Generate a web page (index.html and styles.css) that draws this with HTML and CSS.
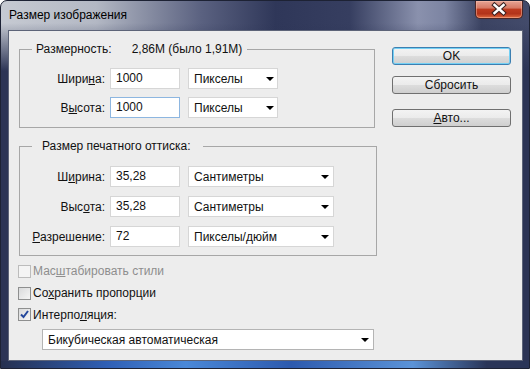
FILE: index.html
```html
<!DOCTYPE html>
<html lang="ru">
<head>
<meta charset="UTF-8">
<title>Размер изображения</title>
<link rel="stylesheet" href="styles.css">
</head>
<body>

<div class="window">
  <!-- Title bar -->
  <div class="titlebar">
    <span class="title">Размер изображения</span>
    <div class="close-btn">
      <svg width="46" height="17" viewBox="0 0 46 17">
        <path d="M18.5 4 L27.5 12 M27.5 4 L18.5 12" stroke="#3a2020" stroke-width="4.5" stroke-linecap="square"/>
        <path d="M18.5 4 L27.5 12 M27.5 4 L18.5 12" stroke="#fff" stroke-width="2.5" stroke-linecap="square"/>
      </svg>
    </div>
  </div>

  <div class="client">
    <div class="main">
      <!-- Pixel dimensions -->
      <fieldset class="group group-pixels">
        <legend><span>Размерность:</span><span class="size-info">2,86M (было 1,91M)</span></legend>
        <div class="row">
          <label>Шири<u>н</u>а:</label>
          <div class="field">1000</div>
          <div class="select"><span>Пикселы</span><i class="arrow"></i></div>
        </div>
        <div class="row">
          <label>В<u>ы</u>сота:</label>
          <div class="field focused">1000</div>
          <div class="select"><span>Пикселы</span><i class="arrow"></i></div>
        </div>
      </fieldset>

      <!-- Document size -->
      <fieldset class="group group-print">
        <legend>Размер печатного оттиска:</legend>
        <div class="row">
          <label>Ш<u>и</u>рина:</label>
          <div class="field">35,28</div>
          <div class="select"><span>Сантиметры</span><i class="arrow"></i></div>
        </div>
        <div class="row">
          <label>Выс<u>о</u>та:</label>
          <div class="field">35,28</div>
          <div class="select"><span>Сантиметры</span><i class="arrow"></i></div>
        </div>
        <div class="row">
          <label><u>Р</u>азрешение:</label>
          <div class="field">72</div>
          <div class="select"><span>Пикселы/дюйм</span><i class="arrow"></i></div>
        </div>
      </fieldset>

      <div class="check-row disabled">
        <span class="checkbox"></span>
        <span>Мас<u>ш</u>табировать стили</span>
      </div>
      <div class="check-row">
        <span class="checkbox"></span>
        <span>Со<u>х</u>ранить пропорции</span>
      </div>
      <div class="check-row short">
        <span class="checkbox checked">
          <svg width="11" height="11" viewBox="0 0 11 11"><path d="M2 5.5 L4.5 8 L9 2" fill="none" stroke="#23479c" stroke-width="2"/></svg>
        </span>
        <span>Интерпо<u>л</u>яция:</span>
      </div>

      <div class="select wide"><span>Бикубическая автоматическая</span><i class="arrow"></i></div>
    </div>

    <!-- Dialog buttons -->
    <div class="buttons">
      <div class="btn default">OK</div>
      <div class="btn">Сбросить</div>
      <div class="btn btn-auto"><u>А</u>вто...</div>
    </div>
  </div>
</div>

</body>
</html>
```

FILE: styles.css
```css
body {
  margin: 0;
  font-family: "Liberation Sans", Arial, sans-serif;
  font-size: 12px;
  color: #111;
}

u {
  text-decoration: underline;
  text-underline-offset: 1px;
}

/* Window frame */
.window {
  width: 530px;
  height: 369px;
  box-sizing: border-box;
  border: 1px solid #1d2234;
  border-radius: 7px 7px 0 0;
  display: flex;
  flex-direction: column;
  background:
    linear-gradient(to right, #26304f, #2f5fb5 20%, #4a88d8 35%, #2d5aae 55%, #5b93d8 78%, #2a3558 92%) bottom / 100% 7px no-repeat,
    linear-gradient(to bottom, rgba(44, 52, 86, 0) 22px, #2c3455 70px),
    linear-gradient(to right, #c6cad2 0%, #b3b8c4 18%, #5a6180 38%, #2f3759 52%, #363e60 66%, #8a91ad 79%, #7c84a2 84%, #3b4362 91%, #434b6b 100%);
}

.titlebar {
  height: 29px;
  display: flex;
  justify-content: space-between;
  align-items: flex-start;
}

.title {
  padding: 7px 0 0 8px;
  line-height: 14px;
  color: #000;
}

.close-btn {
  width: 46px;
  height: 17px;
  margin-right: 6px;
  border: 1px solid #4b2626;
  border-top: none;
  border-radius: 0 0 5px 5px;
  background: linear-gradient(to bottom, #e6a495 0%, #d67a66 40%, #bd3a1f 50%, #b2331a 75%, #e06a3e 100%);
  box-shadow: inset 0 0 0 1px rgba(255, 200, 180, 0.45);
}

.close-btn svg {
  display: block;
}

/* Client area */
.client {
  flex: 1;
  margin: 0 6px 7px 7px;
  border: 1px solid #5d6478;
  background: #ededed;
  display: flex;
  justify-content: space-between;
  padding: 11px 11px 0 10px;
}

.main {
  width: 356px;
}

/* Group boxes */
.group {
  margin: 0;
  padding: 0;
  border: 1px solid #a7a7a7;
  min-inline-size: 0;
}

.group legend {
  margin-left: 12px;
  line-height: 14px;
}

.group-pixels {
  width: 354px;
  padding: 12px 0 9px;
}

.group-pixels legend {
  padding: 0 5px 0 4px;
}

.size-info {
  margin-left: 20px;
}

.group-print {
  width: 356px;
  margin-top: 11px;
  padding: 13px 0 8px;
}

.group-print legend {
  padding: 0 12px 0 10px;
}

.row {
  display: flex;
  align-items: center;
  height: 21px;
}

.row + .row {
  margin-top: 8px;
}

.group-print .row + .row {
  margin-top: 9px;
}

.row label {
  width: 85px;
  margin-right: 5px;
  text-align: right;
}

.field {
  width: 70px;
  height: 21px;
  box-sizing: border-box;
  border: 1px solid #d6d6d6;
  background: #fff;
  padding-left: 5px;
  line-height: 19px;
}

.field.focused {
  border-color: #8db6e0;
}

.select {
  height: 21px;
  box-sizing: border-box;
  border: 1px solid #d6d6d6;
  background: #fff;
  margin-left: 8px;
  padding: 0 3px 0 5px;
  display: flex;
  align-items: center;
  justify-content: space-between;
}

.group-pixels .select {
  width: 90px;
}

.group-print .select {
  width: 146px;
  padding-right: 4px;
}

.select.wide {
  width: 332px;
  margin: 4px 0 0 23px;
  padding-right: 4px;
  border-color: #b4b4b4;
}

.arrow {
  width: 0;
  height: 0;
  border-left: 4px solid transparent;
  border-right: 4px solid transparent;
  border-top: 4px solid #000;
}

/* Checkboxes */
.check-row {
  display: flex;
  align-items: center;
  height: 22px;
  margin-left: -1px;
}

.group-print + .check-row {
  margin-top: 4px;
}

.check-row.short {
  height: 21px;
}

.check-row.disabled {
  color: #8e8e8e;
}

.checkbox {
  width: 13px;
  height: 13px;
  box-sizing: border-box;
  border: 1px solid #8e8f8f;
  background: linear-gradient(135deg, #d9dadb, #f5f5f5);
  margin-right: 2px;
  display: flex;
  align-items: center;
  justify-content: center;
}

.disabled .checkbox {
  border-color: #bcbcbc;
  background: #f4f4f4;
}

/* Buttons */
.buttons {
  width: 119px;
  padding-top: 5px;
}

.btn {
  height: 18px;
  box-sizing: border-box;
  border: 1px solid #707070;
  border-radius: 3px;
  background: linear-gradient(to bottom, #f3f3f3 0%, #ebebeb 49%, #dddddd 50%, #cfcfcf 100%);
  text-align: center;
  line-height: 16px;
}

.btn + .btn {
  margin-top: 11px;
}

.btn.default {
  border-color: #3c7fb1;
  box-shadow: inset 0 0 0 1px #74d0f4;
}

.btn-auto.btn {
  margin-top: 15px;
}
```
